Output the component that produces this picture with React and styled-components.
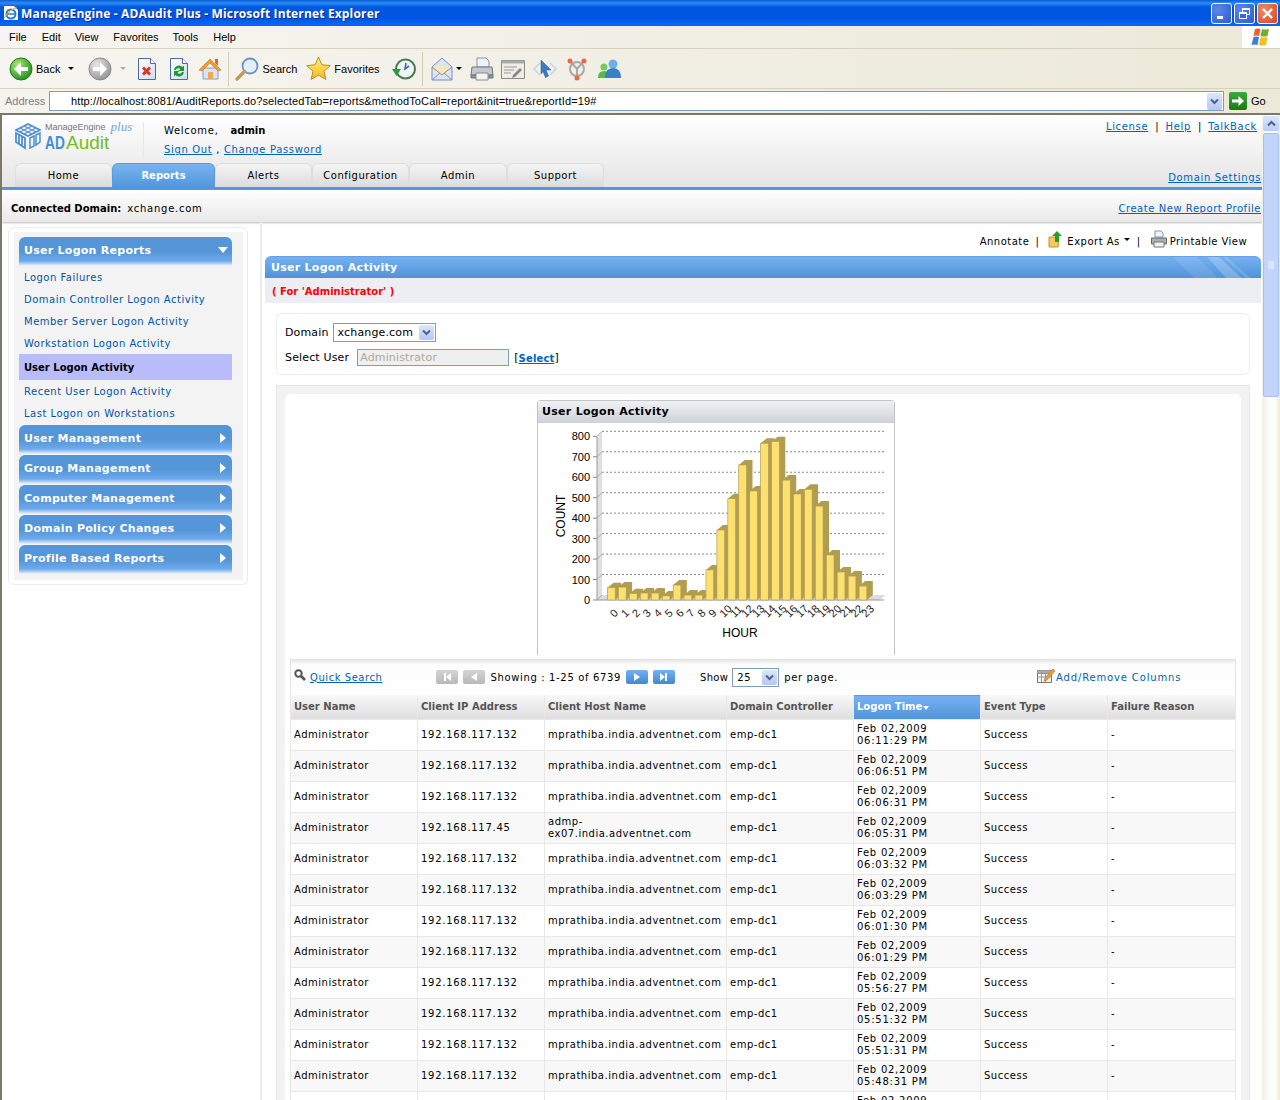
import React from "react";
import styled, { createGlobalStyle } from "styled-components";

const GlobalStyle = createGlobalStyle`
  html, body {
    margin: 0;
    padding: 0;
    background: #fff;
    font-family: "DejaVu Sans", Verdana, sans-serif;
    font-size: 10px;
    color: #000;
  }
`;

const Page = styled.div`
  width: 1280px;
  height: 1100px;
  overflow: hidden;
  display: flex;
  flex-direction: column;
`;

/* ---------- browser chrome ---------- */
const TitleBar = styled.div`
  height: 26px;
  flex: none;
  display: flex;
  align-items: center;
  padding: 0 2px 0 3px;
  background: linear-gradient(#0a5bd6 0, #2b8cf5 3px, #0058e0 7px, #0054e3 18px, #0a68f5 25px, #0a5ee8 26px);
`;

const TitleText = styled.span`
  flex: 1;
  margin-left: 2px;
  color: #fff;
  font: bold 12px "Open Sans", "Liberation Sans", sans-serif;
  letter-spacing: 0.16px;
  text-shadow: 1px 1px 0 #0a2f90;
`;

const WinButton = styled.div`
  width: 19px;
  height: 19px;
  margin-left: 2px;
  border: 1px solid #fff;
  border-radius: 3px;
  display: flex;
  align-items: center;
  justify-content: center;
  background: ${(p) =>
    p.$close
      ? "radial-gradient(circle at 30% 30%, #ec8a68, #d8481e)"
      : "radial-gradient(circle at 30% 30%, #5a88e8, #2a5ad8)"};
`;

const MenuBar = styled.div`
  height: 22px;
  flex: none;
  display: flex;
  align-items: center;
  background: linear-gradient(90deg, #f6f5f1, #ece9d8);
  border-bottom: 1px solid #d8d2bd;
`;

const MenuItem = styled.span`
  font: 11px "Liberation Sans", sans-serif;
  margin-left: ${(p) => p.$gap}px;
`;

const WinFlag = styled.div`
  margin-left: auto;
  width: 38px;
  height: 22px;
  background: #fff;
  display: flex;
  align-items: center;
  justify-content: center;
`;

const ToolBar = styled.div`
  height: 39px;
  flex: none;
  display: flex;
  align-items: center;
  padding-left: 9px;
  background: linear-gradient(90deg, #f6f5f1, #ece9d8);
  border-bottom: 1px solid #d8d2bd;
`;

const ToolLabel = styled.span`
  font: 11px "Liberation Sans", sans-serif;
  margin: 0 ${(p) => p.$after || 0}px 0 ${(p) => p.$before || 0}px;
`;

const ToolIcon = styled.svg`
  flex: none;
  margin-left: ${(p) => p.$left || 0}px;
`;

const ToolSep = styled.div`
  width: 1px;
  height: 34px;
  flex: none;
  margin: 0 ${(p) => p.$right}px 0 ${(p) => p.$left}px;
  background: #d0ccb8;
`;

const ToolGap = styled.div`
  width: ${(p) => p.$w}px;
  flex: none;
`;

const AddressBar = styled.div`
  height: 24px;
  flex: none;
  display: flex;
  align-items: center;
  background: linear-gradient(90deg, #f4f3ee, #ece9d8);
`;

const AddressLabel = styled.span`
  width: 49px;
  padding-left: 5px;
  box-sizing: border-box;
  color: #7f7f7f;
  font: 11px "Liberation Sans", sans-serif;
`;

const AddressField = styled.div`
  width: 1175px;
  height: 20px;
  box-sizing: border-box;
  display: flex;
  align-items: center;
  justify-content: space-between;
  padding: 0 1px 0 21px;
  background: #fff;
  border: 1px solid #7f9db9;
  font: 11px "Liberation Sans", sans-serif;
  letter-spacing: 0.13px;
`;

const ComboArrow = styled.div`
  width: ${(p) => p.$w || 15}px;
  height: ${(p) => p.$h || 17}px;
  flex: none;
  border-radius: 2px;
  display: flex;
  align-items: center;
  justify-content: center;
  background: linear-gradient(#dbe6fc, #b4c8f6);
`;

const GoButton = styled.div`
  width: 18px;
  height: 18px;
  margin-left: 5px;
  border-radius: 2px;
  background: linear-gradient(#3da83d, #137d13);
  display: flex;
  align-items: center;
  justify-content: center;
`;

/* ---------- document ---------- */
const Viewport = styled.div`
  flex: 1;
  min-height: 0;
  display: flex;
  border-top: 2px solid #7c7869;
  border-left: 2px solid #7c7869;
`;

const Doc = styled.div`
  flex: 1;
  min-width: 0;
  display: flex;
  flex-direction: column;
  overflow: hidden;
`;

const Scrollbar = styled.div`
  width: 18px;
  flex: none;
  display: flex;
  flex-direction: column;
  padding: 1px 1px 0;
  box-sizing: border-box;
  background: linear-gradient(90deg, #f1efe9, #fdfdfa 40%, #fdfdfa 75%, #eeeadf);
`;

const ScrollUp = styled.div`
  height: 15px;
  flex: none;
  border-radius: 2px;
  background: linear-gradient(#dbe6fc, #b9cdf8);
  display: flex;
  align-items: center;
  justify-content: center;
`;

const ScrollThumb = styled.div`
  height: 264px;
  margin-top: 2px;
  box-sizing: border-box;
  flex: none;
  border: 1px solid #a8c0f0;
  border-radius: 2px;
  background: #c3d4fb;
  display: flex;
  align-items: center;
  justify-content: center;
`;

const Header = styled.div`
  height: 72px;
  flex: none;
  position: relative;
  display: flex;
  flex-direction: column;
  background: linear-gradient(#fff, #e4e4e4);
`;

const HeaderTop = styled.div`
  height: 48px;
  display: flex;
  align-items: flex-start;
`;

const Logo = styled.div`
  width: 129px;
  height: 36px;
  margin: 7px 0 0 13px;
  display: flex;
  gap: 4px;
  border-right: 1px solid #e6e6e6;
  box-sizing: border-box;
  flex: none;
`;

const LogoText = styled.div`
  display: flex;
  flex-direction: column;
`;

const LogoTop = styled.div`
  display: flex;
  align-items: flex-start;
  color: #777;
  font: 9px "Liberation Sans", sans-serif;
  line-height: 11px;
`;

const LogoPlus = styled.span`
  color: #6fa6e0;
  font: italic 13px "Liberation Serif", serif;
  line-height: 9px;
  margin-left: 5px;
`;

const LogoName = styled.div`
  font: 19px/20px "Liberation Sans", sans-serif;
  color: #77bb22;
  display: flex;
`;

const LogoAd = styled.span`
  font-weight: bold;
  color: #3f8fd8;
  width: 21px;
  transform: scaleX(0.72);
  transform-origin: left;
`;

const Welcome = styled.div`
  margin: 9px 0 0 20px;
  display: flex;
  flex-direction: column;
  gap: 6px;
  line-height: 13px;
  letter-spacing: 0.7px;
`;

const WelcomeName = styled.b`
  margin-left: 12px;
  letter-spacing: 0;
`;

const HLink = styled.a`
  color: #0062bd;
  text-decoration: underline;
  letter-spacing: ${(p) => p.$ls || 0.65}px;
`;

const TopLinks = styled.div`
  margin: 5px 5px 0 auto;
  display: flex;
  gap: 7px;
  line-height: 13px;
`;

const Tabs = styled.div`
  margin-top: auto;
  padding-left: 13px;
  height: 24px;
  display: flex;
  align-items: flex-end;
`;

const Tab = styled.div`
  width: ${(p) => p.$w}px;
  height: 24px;
  box-sizing: border-box;
  display: flex;
  align-items: center;
  justify-content: center;
  border: 1px solid ${(p) => (p.$active ? "#5c9be0" : "#ddd")};
  border-bottom: 0;
  border-radius: 6px 6px 0 0;
  letter-spacing: ${(p) => (p.$active ? 0 : 0.5)}px;
  font-weight: ${(p) => (p.$active ? "bold" : "normal")};
  color: ${(p) => (p.$active ? "#fff" : "#000")};
  background: ${(p) =>
    p.$active ? "linear-gradient(#79b4f0, #5296dc)" : "linear-gradient(#f4f4f4, #dcdcdc)"};
`;

const DomainSettings = styled.div`
  position: absolute;
  right: 1px;
  bottom: 3px;
  line-height: 13px;
`;

const HeaderRule = styled.div`
  height: 3px;
  flex: none;
  background: #5596d9;
`;

const ConnectedBar = styled.div`
  height: 32px;
  flex: none;
  display: flex;
  align-items: center;
  justify-content: space-between;
  box-sizing: border-box;
  padding: 5px 1px 0 9px;
  background: linear-gradient(#fff, #e8e8e8);
  box-shadow: 0 1px 2px #bbb;
`;

const ConnectedLabel = styled.b`
  margin-right: 6px;
`;

const ConnectedName = styled.span`
  letter-spacing: 0.75px;
`;

const Main = styled.div`
  flex: 1;
  min-height: 0;
  display: flex;
`;

/* ---------- sidebar ---------- */
const SideColumn = styled.div`
  width: 260px;
  flex: none;
  box-sizing: border-box;
  padding: 5px 12px 0 6px;
  border-right: 2px solid #ececec;
`;

const SideCard = styled.div`
  box-sizing: border-box;
  height: 358px;
  border: 1px solid #ececec;
  border-radius: 6px;
  padding: 4px 4px 4px 5px;
`;

const SideInner = styled.div`
  height: 100%;
  box-sizing: border-box;
  padding: 5px 11px 0 5px;
  background: #f3f3f3;
`;

const SideHead = styled.div`
  height: 29px;
  margin-bottom: ${(p) => (p.$open ? 0 : 1)}px;
  box-sizing: border-box;
  padding: 0 6px 3px 5px;
  display: flex;
  align-items: center;
  justify-content: space-between;
  border-radius: 6px 6px 0 0;
  color: #fff;
  font-size: 11px;
  font-weight: bold;
  letter-spacing: 0.27px;
  background: linear-gradient(#5596d9 0, #5596d9 15px, #6caaec 24px, #f3f3f3 29px);
`;

const OpenArrow = styled.svg`
  margin-right: -2px;
`;

const SideItem = styled.a`
  display: flex;
  align-items: center;
  height: 22px;
  padding-left: 5px;
  color: #0055a8;
  letter-spacing: 0.5px;
`;

const SideActive = styled.div`
  display: flex;
  align-items: center;
  height: 26px;
  padding-left: 5px;
  background: #b9bcfb;
  font-weight: bold;
`;

const SideList = styled.div`
  padding-bottom: 1px;
  display: flex;
  flex-direction: column;
`;

/* ---------- content ---------- */
const Content = styled.div`
  flex: 1;
  min-width: 0;
  padding: 0 1px 0 3px;
  overflow: hidden;
`;

const ActionRow = styled.div`
  height: 34px;
  box-sizing: border-box;
  padding: 4px 14px 0 0;
  display: flex;
  align-items: center;
  justify-content: flex-end;
  letter-spacing: 0.5px;
`;

const ActionSep = styled.span`
  margin: 0 ${(p) => p.$right}px 0 ${(p) => p.$left}px;
`;

const ActionIcon = styled.svg`
  margin: 0 3px 5px 0;
`;

const Caret = styled.span`
  width: 0;
  height: 0;
  margin: 0 0 4px 4px;
  border: 3px solid transparent;
  border-top: 3px solid #000;
  border-bottom: 0;
`;

const PrintLabel = styled.span`
  letter-spacing: 0.43px;
`;

const TitleStrip = styled.div`
  height: 22px;
  position: relative;
  overflow: hidden;
  box-sizing: border-box;
  display: flex;
  align-items: center;
  padding-left: 6px;
  border-radius: 6px 6px 0 0;
  border-top: 1px solid #6b9ee8;
  color: #fff;
  font-size: 11px;
  font-weight: bold;
  letter-spacing: 0.27px;
  background: linear-gradient(#74b1f0, #5192da);
`;

const StripStripes = styled.svg`
  position: absolute;
  right: 0;
  top: 0;
`;

const SubStrip = styled.div`
  height: 25px;
  box-sizing: border-box;
  padding: 1px 0 0 7px;
  display: flex;
  align-items: center;
  background: #eceef3;
  color: #f00;
  font-weight: bold;
`;

const Body = styled.div`
  padding: 10px 11px 0 11px;
`;

const FilterCard = styled.div`
  height: 62px;
  box-sizing: border-box;
  border: 1px solid #ececec;
  border-radius: 6px;
  padding: 9px 8px 0;
  display: flex;
  flex-direction: column;
  gap: 6px;
  font-size: 11px;
  letter-spacing: 0.15px;
`;

const FilterRow = styled.div`
  display: flex;
  align-items: center;
  height: 19px;
`;

const Combo = styled.div`
  width: ${(p) => p.$w}px;
  height: 19px;
  margin: 0 ${(p) => p.$right || 0}px 0 ${(p) => p.$left || 0}px;
  box-sizing: border-box;
  border: 1px solid #7f9db9;
  padding: 0 1px 0 4px;
  display: flex;
  align-items: center;
  justify-content: space-between;
  background: #fff;
  flex: none;
`;

const UserInput = styled.div`
  width: 152px;
  height: 17px;
  margin: 0 5px 0 8px;
  box-sizing: border-box;
  border: 1px solid #7f9db9;
  padding-left: 2px;
  background: #efefef;
  color: #aca899;
  display: flex;
  align-items: center;
`;

const SelectLink = styled.a`
  font-size: 10px;
  font-weight: bold;
  color: #0062bd;
  text-decoration: underline;
  padding-top: 1px;
`;

const Panel = styled.div`
  margin-top: 10px;
  padding: 8px 8px 0;
  background: #f2f2f2;
  border: 1px solid #e6e6e6;
  border-bottom: 0;
`;

const PanelInner = styled.div`
  background: #fff;
  border-radius: 6px 6px 0 0;
  padding: 6px 5px 0 5px;
`;

const ChartCard = styled.div`
  width: 358px;
  height: 255px;
  margin-left: 247px;
  box-sizing: border-box;
  border: 1px solid #c4c4c4;
  border-bottom: 0;
  border-radius: 4px 4px 0 0;
`;

const ChartHead = styled.div`
  height: 22px;
  box-sizing: border-box;
  padding: 0 0 1px 4px;
  display: flex;
  align-items: center;
  font-size: 11px;
  font-weight: bold;
  letter-spacing: 0.3px;
  background: linear-gradient(#f0f1f4, #cdd1d8);
`;

const TableBar = styled.div`
  height: 36px;
  margin-top: 4px;
  box-sizing: border-box;
  display: flex;
  align-items: center;
  border-left: 1px solid #e6e6e6;
  border-right: 1px solid #e6e6e6;
  background: linear-gradient(#e0e0e0 0, #fcfcfc 5px, #fff 100%);
  letter-spacing: 0.65px;
  padding-left: 3px;
`;

const SearchGlyph = styled.svg`
  margin: 0 4px 4px 0;
`;

const PageBtn = styled.div`
  width: 22px;
  height: 14px;
  margin: 0 5px 0 ${(p) => p.$left || 0}px;
  flex: none;
  border-radius: 2px;
  display: flex;
  align-items: center;
  justify-content: center;
  background: ${(p) => (p.$on ? "linear-gradient(#74b1f0, #4288d4)" : "linear-gradient(#d4d4d4, #b8b8b8)")};
`;

const ShowLabel = styled.span`
  margin-left: 20px;
  letter-spacing: 0.3px;
`;

const ColumnsIcon = styled.svg`
  margin: 0 0 4px 199px;
`;

const ColumnsLink = styled.span`
  color: #0062bd;
  letter-spacing: 0.85px;
`;

const Grid = styled.table`
  width: 945px;
  table-layout: fixed;
  border-collapse: collapse;
  font-size: 10px;
  letter-spacing: 0.52px;
`;

const Th = styled.th`
  height: 24px;
  box-sizing: border-box;
  padding: 0 3px;
  text-align: left;
  border: 1px solid #e8e8e8;
  border-top: 0;
  letter-spacing: 0;
  color: ${(p) => (p.$sorted ? "#fff" : "#555")};
  background: ${(p) =>
    p.$sorted
      ? "linear-gradient(#76b2f2, #5094da)"
      : "linear-gradient(#f8f8f8, #dedede)"};
  box-shadow: ${(p) => (p.$sorted ? "inset 0 1px 0 #5f96ea" : "none")};
`;

const Td = styled.td`
  height: 31px;
  box-sizing: border-box;
  padding: 0 3px;
  border: 1px solid #e8e8e8;
  line-height: 12px;
  white-space: nowrap;
  letter-spacing: ${(p) => p.$ls || 0.52}px;
  background: ${(p) => (p.$odd ? "#f8f8f8" : "#fff")};
`;

const SortCaret = styled.span`
  display: inline-block;
  width: 0;
  height: 0;
  margin-left: 1px;
  border: 3.5px solid transparent;
  border-top: 4px solid #fff;
  border-bottom: 0;
`;

/* ---------- drawings ---------- */
const DownChevron = () => (
  <svg width="9" height="7" viewBox="0 0 9 7">
    <path d="M1 1.5 4.500 5 8 1.500" fill="none" stroke="#4d6185" strokeWidth="2" />
  </svg>
);

const SmallCaret = ({ left, color = "#000" }) => (
  <ToolIcon $left={left} width="6" height="3" viewBox="0 0 6 3">
    <path d="M0 0h6L3 3z" fill={color} />
  </ToolIcon>
);

const RoundArrow = ({ off }) => (
  <ToolIcon width="24" height="24" viewBox="0 0 24 24">
    <defs>
      <radialGradient id={off ? "ra0" : "ra1"} cx="0.35" cy="0.3" r="0.8">
        <stop offset="0" stopColor={off ? "#e8e8e8" : "#a6e86e"} />
        <stop offset="1" stopColor={off ? "#8e8e8e" : "#1c8a1c"} />
      </radialGradient>
    </defs>
    <circle cx="12" cy="12" r="11" fill={`url(#${off ? "ra0" : "ra1"})`} stroke={off ? "#8a8a8a" : "#1b7a1b"} />
    <path d={off ? "M5 10h7V5l7 7-7 7v-5H5z" : "M19 10h-7V5l-7 7 7 7v-5h7z"} fill="#fff" />
  </ToolIcon>
);

const PageIcon = ({ left, children }) => (
  <ToolIcon $left={left} width="20" height="24" viewBox="0 0 20 24">
    <defs>
      <linearGradient id="sheet" x1="0" y1="0" x2="1" y2="1">
        <stop offset="0" stopColor="#fff" />
        <stop offset="1" stopColor="#cfdcf5" />
      </linearGradient>
    </defs>
    <path d="M1.500 1.500h12l5 5v16h-17z" fill="url(#sheet)" stroke="#4f69a8" />
    <path d="M13.500 1.500v5h5" fill="#fff" stroke="#4f69a8" />
    {children}
  </ToolIcon>
);

const Cube = () => (
  <svg width="26" height="28" viewBox="0 0 26 28" fill="none" stroke="#4f8fd0" strokeWidth="1.800">
    <path d="M1 8 13 2l12 6-12 6z" />
    <path d="M5 10 17 4M9 12 21 6M5 6l12 6M9 4l12 6" strokeWidth="1.200" />
    <path d="M1 11v9l9 6V16zM4 13v9M7 15v9" />
    <path d="M15 16l4-2v10l-4 2zM21 13l4-2v9l-4 3z" strokeWidth="1.500" />
  </svg>
);

/* ---------- chart ---------- */
const COUNTS = [60, 63, 31, 34, 34, 20, 73, 24, 24, 147, 342, 495, 660, 533, 766, 774, 586, 518, 541, 459, 220, 137, 117, 68];
const FLOOR = 177; // y of the front axis inside the svg
const UNIT = 0.2046;

const LogonChart = () => (
  <svg width="356" height="232" viewBox="0 0 356 232">
    <path d="M59 14 64 9v164l-5 5z" fill="#e0e0e0" />
    <path d="M59 177 64 172h283l-5 5z" fill="#dcdcdc" />
    {[1, 2, 3, 4, 5, 6, 7, 8].map((n) => (
      <line
        key={n}
        x1="64"
        x2="346"
        y1={FLOOR - 5 - n * 100 * UNIT}
        y2={FLOOR - 5 - n * 100 * UNIT}
        stroke="#888"
        strokeDasharray="2 2"
      />
    ))}
    <path d="M59 14V177H346" fill="none" stroke="#999" />
    {[0, 1, 2, 3, 4, 5, 6, 7, 8].map((n) => (
      <g key={n}>
        <line x1="55" x2="59" y1={FLOOR - n * 100 * UNIT} y2={FLOOR - n * 100 * UNIT} stroke="#888" />
        <line x1="59" x2="64" y1={FLOOR - n * 100 * UNIT} y2={FLOOR - 5 - n * 100 * UNIT} stroke="#aaa" />
        <text x="52" y={FLOOR + 4 - n * 100 * UNIT} textAnchor="end" fontFamily="Liberation Sans" fontSize="11">
          {n * 100}
        </text>
      </g>
    ))}
    {COUNTS.map((c, i) => {
      const x = 69.5 + i * 10.94;
      const h = c * UNIT;
      const top = FLOOR - h;
      return (
        <g key={i}>
          <path d={`M${x} ${top}l6 -5h7.700v${h}l-6 5h-7.700z`} fill="#b19d4f" />
          <rect x={x} y={top} width="7.7" height={h} fill="#fde06f" stroke="#b19d4f" strokeWidth="0.6" />
          <text
            transform={`translate(${x + 7} 195) rotate(-45)`}
            fontFamily="Liberation Sans"
            fontSize="11"
            fill="#222"
          >
            {i}
          </text>
        </g>
      );
    })}
    <text transform="translate(27 93) rotate(-90)" textAnchor="middle" fontFamily="Liberation Sans" fontSize="12">
      COUNT
    </text>
    <text x="202" y="214" textAnchor="middle" fontFamily="Liberation Sans" fontSize="12">
      HOUR
    </text>
  </svg>
);

/* ---------- data ---------- */
const COLS = [
  ["User Name", 127],
  ["Client IP Address", 127],
  ["Client Host Name", 182],
  ["Domain Controller", 127],
  ["Logon Time", 127],
  ["Event Type", 127],
  ["Failure Reason", 128],
];

const HOST = "mprathiba.india.adventnet.com";
const ROWS = [
  ["192.168.117.132", HOST, "06:11:29 PM"],
  ["192.168.117.132", HOST, "06:06:51 PM"],
  ["192.168.117.132", HOST, "06:06:31 PM"],
  ["192.168.117.45", "admp-ex07", "06:05:31 PM"],
  ["192.168.117.132", HOST, "06:03:32 PM"],
  ["192.168.117.132", HOST, "06:03:29 PM"],
  ["192.168.117.132", HOST, "06:01:30 PM"],
  ["192.168.117.132", HOST, "06:01:29 PM"],
  ["192.168.117.132", HOST, "05:56:27 PM"],
  ["192.168.117.132", HOST, "05:51:32 PM"],
  ["192.168.117.132", HOST, "05:51:31 PM"],
  ["192.168.117.132", HOST, "05:48:31 PM"],
  ["192.168.117.132", HOST, "05:48:30 PM"],
];

const MENU = [["File", 9], ["Edit", 15], ["View", 14], ["Favorites", 15], ["Tools", 14], ["Help", 15]];
const TABS = [["Home", 97], ["Reports", 103, true], ["Alerts", 97], ["Configuration", 97], ["Admin", 98], ["Support", 97]];
const SIDE_TOP = ["Logon Failures", "Domain Controller Logon Activity", "Member Server Logon Activity", "Workstation Logon Activity"];
const SIDE_BOTTOM = ["Recent User Logon Activity", "Last Logon on Workstations"];
const SIDE_HEADS = ["User Management", "Group Management", "Computer Management", "Domain Policy Changes", "Profile Based Reports"];

const App = () => (
  <Page>
    <GlobalStyle />
    <TitleBar>
      <svg width="16" height="16" viewBox="0 0 16 16">
        <path d="M1 1h10l4 4v10H1z" fill="#fff" />
        <circle cx="8" cy="9" r="4.500" fill="none" stroke="#2a7ad8" strokeWidth="2" />
        <path d="M4 9h8" stroke="#2a7ad8" strokeWidth="1.500" />
        <path d="M1 13Q8 3 14 3" fill="none" stroke="#e8b030" />
      </svg>
      <TitleText>ManageEngine - ADAudit Plus - Microsoft Internet Explorer</TitleText>
      <WinButton>
        <svg width="13" height="13" viewBox="0 0 13 13"><path d="M2 9h6v3H2z" fill="#fff" /></svg>
      </WinButton>
      <WinButton>
        <svg width="13" height="13" viewBox="0 0 13 13" fill="none" stroke="#fff">
          <path d="M4.500 1.500h7v6h-7z" />
          <path d="M1.500 5.500h7v6h-7z" fill="#3a68dc" />
          <path d="M1.500 6h7M4.500 2h7" strokeWidth="2" />
        </svg>
      </WinButton>
      <WinButton $close>
        <svg width="13" height="13" viewBox="0 0 13 13"><path d="M2 2l9 9M11 2l-9 9" stroke="#fff" strokeWidth="2.400" /></svg>
      </WinButton>
    </TitleBar>

    <MenuBar>
      {MENU.map(([m, g]) => (
        <MenuItem key={m} $gap={g}>{m}</MenuItem>
      ))}
      <WinFlag>
        <svg width="20" height="20" viewBox="0 0 20 20">
          <path d="M4 2q3-1 5.500 0l-1.500 7q-3-1-5.500 0z" fill="#e8622a" />
          <path d="M11 2q3 1 7 0l-1.500 7q-4 1-7 0z" fill="#6cb02c" />
          <path d="M2.500 10q3-1 5.500 0l-1.500 8q-3-1-6 0z" fill="#3a80d8" />
          <path d="M9.500 10q3 1 7 0l-1.500 8q-4 1-7 0z" fill="#f0c020" />
        </svg>
      </WinFlag>
    </MenuBar>

    <ToolBar>
      <RoundArrow />
      <ToolLabel $before={3}>Back</ToolLabel>
      <SmallCaret left={8} />
      <ToolGap $w={14} />
      <RoundArrow off />
      <SmallCaret left={8} color="#aaa" />
      <PageIcon left={11}>
        <path d="M6 10.500l7 7M13 10.500l-7 7" stroke="#d03a20" strokeWidth="3" />
      </PageIcon>
      <PageIcon left={12}>
        <path d="M5 13a5 5 0 0 1 8.500-3l1.500-1.500V14h-5.500l2-2a2.800 2.800 0 0 0-4.500 1z" fill="#1c9a2c" />
        <path d="M15 15a5 5 0 0 1-8.500 3L5 19.500V14h5.500l-2 2a2.800 2.800 0 0 0 4.500-1z" fill="#1c9a2c" />
      </PageIcon>
      <ToolIcon $left={9} width="24" height="24" viewBox="0 0 24 24">
        <path d="M5 11v11h15V11z" fill="#d6e4f6" stroke="#8a9cc0" />
        <path d="M1 13 12 2l11 11-3 1-8-8-8 8z" fill="#f09a30" stroke="#c87a20" strokeWidth=".6" />
        <path d="M10 15h5v7h-5z" fill="#f0a850" />
        <path d="M17 2h3v7l-3-3z" fill="#e8622a" />
      </ToolIcon>
      <ToolSep $left={6} $right={6} />
      <svg width="24" height="24" viewBox="0 0 24 24">
        <circle cx="15" cy="9" r="7.500" fill="#e2effb" stroke="#6a94c0" strokeWidth="1.800" />
        <path d="M9.500 14.500 2 22" stroke="#c09a58" strokeWidth="3.400" strokeLinecap="round" />
      </svg>
      <ToolLabel $before={3} $after={9}>Search</ToolLabel>
      <svg width="25" height="25" viewBox="0 0 25 25">
        <defs>
          <linearGradient id="star" x1="0" y1="0" x2="0" y2="1">
            <stop offset="0" stopColor="#fff27a" />
            <stop offset="1" stopColor="#f4b820" />
          </linearGradient>
        </defs>
        <path d="M12.500 1l3.400 7.800 8.400.8-6.300 5.600 1.900 8.300-7.400-4.400-7.400 4.400 1.900-8.300L.7 9.600l8.400-.8z" fill="url(#star)" stroke="#b89020" />
      </svg>
      <ToolLabel $before={3} $after={12}>Favorites</ToolLabel>
      <svg width="24" height="24" viewBox="0 0 24 24">
        <circle cx="13.500" cy="12" r="9.500" fill="#f0f4f6" stroke="#4a7a50" strokeWidth="2" />
        <path d="M14 6l-1 6 4-3" fill="none" stroke="#3a6ab0" strokeWidth="1.600" />
        <path d="M0 12h9l-4.500 7z" fill="#2a9a3a" />
      </svg>
      <ToolSep $left={6} $right={8} />
      <svg width="23" height="26" viewBox="0 0 23 26">
        <path d="M1 11 11 2l10 9v13H1z" fill="#d8e4f8" stroke="#7a90c0" />
        <path d="M3 10h16v6l-8 4-8-4z" fill="#f8e6b8" />
        <path d="M1 11l10 8 10-8M1 24l8-7M21 24l-8-7" stroke="#7a90c0" fill="none" />
      </svg>
      <SmallCaret left={2} />
      <ToolIcon $left={8} width="24" height="26" viewBox="0 0 24 26">
        <path d="M7 11V2h9l3 3v6z" fill="#eef2fa" stroke="#8895a8" />
        <path d="M2 11h20l1 8H1z" fill="#c4c9cd" stroke="#6f7780" />
        <path d="M1 19h22v3H1z" fill="#8f959b" stroke="#6f7780" />
        <path d="M6 17h12v7H6z" fill="#f4f4f4" stroke="#8a8a8a" />
      </ToolIcon>
      <ToolIcon $left={7} width="24" height="22" viewBox="0 0 24 22">
        <path d="M.5 2.500h23v18H.5z" fill="#eeeee6" stroke="#8a8a80" />
        <path d="M.5 2.500h23v3H.5z" fill="#a8aca8" />
        <path d="M3 9h13M3 12h10M3 15h7" stroke="#999" />
        <path d="M12 17l7-7 2 2-7 7-3 1z" fill="#888" />
      </ToolIcon>
      <ToolIcon $left={8} width="24" height="24" viewBox="0 0 24 24">
        <path d="M7 6 1 12l6 6M17 6l6 6-6 6" fill="none" stroke="#c8d4e4" strokeWidth="1.600" />
        <path d="M8 3l10 10h-5l2.500 6-3 1.500-2.500-6L8 17z" fill="#3a7ac8" stroke="#24588f" strokeWidth=".5" />
      </ToolIcon>
      <ToolIcon $left={8} width="24" height="24" viewBox="0 0 24 24" fill="none">
        <circle cx="12" cy="12" r="7" stroke="#a8a8a8" strokeWidth="2" />
        <path d="M5 4l7 8 7-8M12 12v9" stroke="#a8a8a8" strokeWidth="2" />
        <circle cx="5" cy="4" r="2.500" fill="#e86a40" />
        <circle cx="19" cy="4" r="2.500" fill="#e86a40" />
        <circle cx="12" cy="21" r="2.500" fill="#e86a40" />
      </ToolIcon>
      <ToolIcon $left={8} width="24" height="24" viewBox="0 0 24 24">
        <circle cx="7" cy="10" r="3.500" fill="#7ac860" />
        <path d="M1 21q0-7 6-7t6 7z" fill="#5ab848" />
        <circle cx="16" cy="7" r="4.500" fill="#6ab0e8" />
        <path d="M8 21q0-10 8-10t8 10z" fill="#3a80c8" />
      </ToolIcon>
    </ToolBar>

    <AddressBar>
      <AddressLabel>Address</AddressLabel>
      <AddressField>
        <span>http://localhost:8081/AuditReports.do?selectedTab=reports&amp;methodToCall=report&amp;init=true&amp;reportId=19#</span>
        <ComboArrow><DownChevron /></ComboArrow>
      </AddressField>
      <GoButton>
        <svg width="14" height="14" viewBox="0 0 14 14"><path d="M1 5.500h6.500V2l5.500 5-5.500 5V8.500H1z" fill="#fff" /></svg>
      </GoButton>
      <ToolLabel $before={4}>Go</ToolLabel>
    </AddressBar>

    <Viewport>
      <Doc>
        <Header>
          <HeaderTop>
            <Logo>
              <Cube />
              <LogoText>
                <LogoTop>ManageEngine<LogoPlus>plus</LogoPlus></LogoTop>
                <LogoName><LogoAd>AD</LogoAd>Audit</LogoName>
              </LogoText>
            </Logo>
            <Welcome>
              <span>Welcome,<WelcomeName>admin</WelcomeName></span>
              <span><HLink>Sign Out</HLink> , <HLink>Change Password</HLink></span>
            </Welcome>
            <TopLinks>
              <HLink>License</HLink><span>|</span><HLink>Help</HLink><span>|</span><HLink>TalkBack</HLink>
            </TopLinks>
          </HeaderTop>
          <Tabs>
            {TABS.map(([t, w, active]) => (
              <Tab key={t} $w={w} $active={active}>{t}</Tab>
            ))}
          </Tabs>
          <DomainSettings><HLink>Domain Settings</HLink></DomainSettings>
        </Header>
        <HeaderRule />
        <ConnectedBar>
          <span><ConnectedLabel>Connected Domain:</ConnectedLabel><ConnectedName>xchange.com</ConnectedName></span>
          <HLink $ls={0.55}>Create New Report Profile</HLink>
        </ConnectedBar>

        <Main>
          <SideColumn>
            <SideCard>
              <SideInner>
                <SideHead $open>
                  User Logon Reports
                  <OpenArrow width="10" height="6" viewBox="0 0 10 6"><path d="M0 0h10L5 6z" fill="#fff" /></OpenArrow>
                </SideHead>
                <SideList>
                  {SIDE_TOP.map((s) => <SideItem key={s}>{s}</SideItem>)}
                  <SideActive>User Logon Activity</SideActive>
                  {SIDE_BOTTOM.map((s) => <SideItem key={s}>{s}</SideItem>)}
                </SideList>
                {SIDE_HEADS.map((s) => (
                  <SideHead key={s}>
                    {s}
                    <svg width="6" height="10" viewBox="0 0 6 10"><path d="M0 0l6 5-6 5z" fill="#fff" /></svg>
                  </SideHead>
                ))}
              </SideInner>
            </SideCard>
          </SideColumn>

          <Content>
            <ActionRow>
              Annotate<ActionSep $left={6} $right={9}>|</ActionSep>
              <ActionIcon width="16" height="18" viewBox="0 0 16 18">
                <path d="M1 7h8l2 2-1 8H1z" fill="#f8c860" stroke="#d09030" />
                <path d="M9 1l5 5h-3v6H7V6H4z" fill="#2a9a2a" />
              </ActionIcon>
              Export As<Caret />
              <ActionSep $left={7} $right={10}>|</ActionSep>
              <ActionIcon width="16" height="18" viewBox="0 0 16 18">
                <path d="M4 7V1h6l2 2v4z" fill="#eef2fa" stroke="#8895a8" />
                <path d="M0.500 8h15v6H.5z" fill="#aab0b4" stroke="#666" />
                <path d="M3 12h10v5H3z" fill="#f0f0f0" stroke="#777" />
              </ActionIcon>
              <PrintLabel>Printable View</PrintLabel>
            </ActionRow>
            <TitleStrip>
              User Logon Activity
              <StripStripes width="90" height="22" viewBox="0 0 90 22">
                <path d="M2 0h24l22 22H24z" fill="#fff" opacity=".1" />
                <path d="M36 0h12l24 22H56z" fill="#fff" opacity=".22" />
                <path d="M52 0h4l24 22h-4z" fill="#fff" opacity=".15" />
              </StripStripes>
            </TitleStrip>
            <SubStrip>( For 'Administrator' )</SubStrip>

            <Body>
              <FilterCard>
                <FilterRow>
                  Domain
                  <Combo $w={103} $left={4}>
                    xchange.com
                    <ComboArrow $w={15} $h={15}><DownChevron /></ComboArrow>
                  </Combo>
                </FilterRow>
                <FilterRow>
                  Select User
                  <UserInput>Administrator</UserInput>
                  [<SelectLink>Select</SelectLink>]
                </FilterRow>
              </FilterCard>

              <Panel>
                <PanelInner>
                  <ChartCard>
                    <ChartHead>User Logon Activity</ChartHead>
                    <LogonChart />
                  </ChartCard>
                  <TableBar>
                    <SearchGlyph width="12" height="12" viewBox="0 0 12 12">
                      <circle cx="4.500" cy="4.500" r="3.200" fill="#fff" stroke="#555" strokeWidth="2" />
                      <path d="M7 7l4 4" stroke="#555" strokeWidth="2.600" />
                    </SearchGlyph>
                    <HLink $ls={0.55}>Quick Search</HLink>
                    <PageBtn $left={54}><svg width="8" height="8" viewBox="0 0 8 8"><path d="M1 0h2v8H1zM8 0v8L3 4z" fill="#fff" /></svg></PageBtn>
                    <PageBtn><svg width="6" height="8" viewBox="0 0 6 8"><path d="M6 0v8L0 4z" fill="#fff" /></svg></PageBtn>
                    Showing : 1-25 of 6739
                    <PageBtn $on $left={5}><svg width="6" height="8" viewBox="0 0 6 8"><path d="M0 0v8l6-4z" fill="#fff" /></svg></PageBtn>
                    <PageBtn $on><svg width="8" height="8" viewBox="0 0 8 8"><path d="M0 0v8l5-4zM5 0h2v8H5z" fill="#fff" /></svg></PageBtn>
                    <ShowLabel>Show</ShowLabel>
                    <Combo $w={47} $left={4} $right={5}>
                      25
                      <ComboArrow $w={15} $h={15}><DownChevron /></ComboArrow>
                    </Combo>
                    per page.
                    <ColumnsIcon width="19" height="15" viewBox="0 0 19 15">
                      <path d="M.5 2.500h14v12H.5z" fill="#f4f4f4" stroke="#777" />
                      <path d="M.5 2.500h14v3H.5zM4.500 5v9M8.500 5v9M.5 9h14" fill="#aaa" stroke="#999" />
                      <path d="M8 10l8-9 2 2-8 9-3 1z" fill="#f0a030" stroke="#c05020" strokeWidth=".5" />
                    </ColumnsIcon>
                    <ColumnsLink>Add/Remove Columns</ColumnsLink>
                  </TableBar>
                  <Grid>
                    <colgroup>
                      {COLS.map(([c, w]) => <col key={c} width={w} />)}
                    </colgroup>
                    <thead>
                      <tr>
                        {COLS.map(([c]) => (
                          <Th key={c} $sorted={c === "Logon Time"}>
                            {c}
                            {c === "Logon Time" && <SortCaret />}
                          </Th>
                        ))}
                      </tr>
                    </thead>
                    <tbody>
                      {ROWS.map(([ip, host, time], i) => (
                        <tr key={i}>
                          <Td $odd={i % 2}>Administrator</Td>
                          <Td $odd={i % 2} $ls={0.72}>{ip}</Td>
                          <Td $odd={i % 2}>
                            {host === HOST ? host : <>admp-<br />ex07.india.adventnet.com</>}
                          </Td>
                          <Td $odd={i % 2}>emp-dc1</Td>
                          <Td $odd={i % 2} $ls={0.75}>Feb 02,2009<br />{time}</Td>
                          <Td $odd={i % 2}>Success</Td>
                          <Td $odd={i % 2}>-</Td>
                        </tr>
                      ))}
                    </tbody>
                  </Grid>
                </PanelInner>
              </Panel>
            </Body>
          </Content>
        </Main>
      </Doc>
      <Scrollbar>
        <ScrollUp>
          <svg width="9" height="7" viewBox="0 0 9 7"><path d="M1 5.500 4.500 2 8 5.500" fill="none" stroke="#4d6185" strokeWidth="2" /></svg>
        </ScrollUp>
        <ScrollThumb>
          <svg width="8" height="8" viewBox="0 0 8 8"><path d="M1 1h6M1 3h6M1 5h6M1 7h6" stroke="#f0f4ff" /></svg>
        </ScrollThumb>
      </Scrollbar>
    </Viewport>
  </Page>
);

export default App;
